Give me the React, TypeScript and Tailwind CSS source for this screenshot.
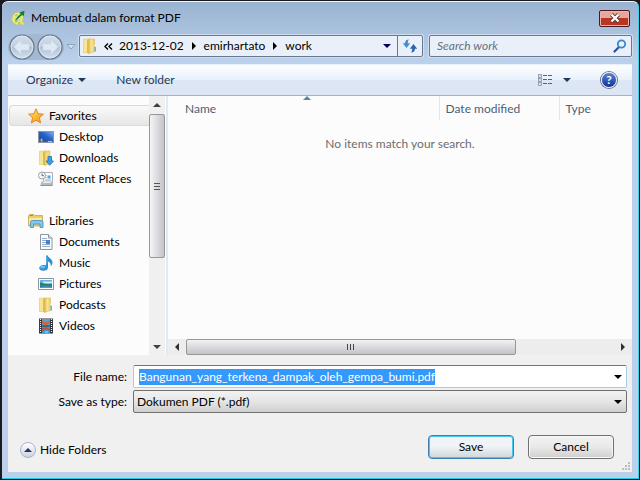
import React, { useEffect, useRef } from "react";

type IconProps = { className?: string };

function AppLogo() {
  return (
    <svg width="16" height="16" viewBox="0 0 16 16" aria-hidden="true">
      <ellipse cx="6.500" cy="8.500" rx="4" ry="4.700" fill="#cbdcae" stroke="#e9ee5c" strokeWidth="2.600" transform="rotate(15 6.500 8.500)" />
      <path d="M8 11l4.500 3" stroke="#e3e85a" strokeWidth="2.400" />
      <path d="M4.500 12.500l2-2M4.500 5.500l1.500-1M7 13.300l2-.8" stroke="#96a83e" />
      <path d="M4 11.500C4.800 8.500 6.800 6 9.800 4L8.500 2.500 13.500.8 12.800 6 11.300 5C9 6.500 6.500 9 4 11.500z" fill="#1c7a2c" />
    </svg>
  );
}

function FolderIcon({ className }: IconProps) {
  return (
    <svg className={className} width="16" height="16" viewBox="0 0 16 16" aria-hidden="true">
      <defs>
        <linearGradient id="leaf" x1="0" y1="0" x2="1" y2="0">
          <stop offset="0" stopColor="#e2bf55" />
          <stop offset=".5" stopColor="#f8e396" />
          <stop offset="1" stopColor="#ecca66" />
        </linearGradient>
      </defs>
      <path d="M1.500 1.200H8v13.300H1.500z" fill="#f7e495" stroke="#e2c66c" strokeWidth=".6" />
      <path d="M6.500 1H12.500v12.500l-6 2z" fill="url(#leaf)" stroke="#dcba55" strokeWidth=".6" />
      <path d="M5 1.800l2.200-.6v14.300L5 14.800z" fill="#dfba4e" />
      <path d="M12.500 8.500H14v5h-1.500z" fill="#5fb4ea" />
      <path d="M12.500 6.500h1.300v2h-1.300z" fill="#fff" />
    </svg>
  );
}

function StarIcon() {
  return (
    <svg width="16" height="16" viewBox="0 0 16 16" aria-hidden="true">
      <defs>
        <linearGradient id="star" x1="0" y1="0" x2="1" y2="1">
          <stop offset="0" stopColor="#ffe98a" />
          <stop offset=".5" stopColor="#fdbd35" />
          <stop offset="1" stopColor="#f58a1a" />
        </linearGradient>
      </defs>
      <path d="M8 .8l2.100 4.900 5.300.5-4 3.500 1.200 5.200L8 12.200 3.400 14.900l1.200-5.200-4-3.500 5.300-.5z" fill="url(#star)" stroke="#dd7f22" strokeWidth=".9" strokeLinejoin="round" />
    </svg>
  );
}

function DesktopIcon() {
  return (
    <svg width="16" height="16" viewBox="0 0 16 16" aria-hidden="true">
      <defs>
        <linearGradient id="desk" x1="0" y1="1" x2="1" y2="0">
          <stop offset="0" stopColor="#1743a5" />
          <stop offset=".55" stopColor="#2560c8" />
          <stop offset="1" stopColor="#86b4ea" />
        </linearGradient>
      </defs>
      <rect x=".5" y="2.500" width="15" height="11" fill="url(#desk)" stroke="#8a97aa" />
      <path d="M1 12h14v1H1z" fill="#4b5d78" />
      <path d="M1.500 10h1.500v1.500H1.500z" fill="#e2653a" />
      <path d="M3 9.500h1.500v1.500H3z" fill="#79c04a" />
      <path d="M3 11h1.500v1.500H3z" fill="#f4c431" />
      <path d="M10 12h4v1h-4z" fill="#b4c4d4" />
    </svg>
  );
}

function DownloadsIcon() {
  return (
    <svg width="16" height="16" viewBox="0 0 16 16" aria-hidden="true">
      <path d="M1.500 1.200H8v13.300H1.500z" fill="#f7e495" stroke="#e2c66c" strokeWidth=".6" />
      <path d="M6.500 1H12v12.500l-5.500 2z" fill="#f3d778" stroke="#dcba55" strokeWidth=".6" />
      <path d="M5 1.800l2.200-.6v14.300L5 14.800z" fill="#dfba4e" />
      <path d="M10 6.500h3.500V11h2L11.700 15.300 8 11h2z" fill="#3ba0ea" stroke="#1d6fb8" strokeWidth=".8" />
    </svg>
  );
}

function RecentIcon() {
  return (
    <svg width="16" height="16" viewBox="0 0 16 16" aria-hidden="true">
      <path d="M5.500 1.500h9v10h-9z" fill="#fafbfc" stroke="#a9b0b7" />
      <path d="M9.500 4.500h3v3h-3z" fill="#55a6e2" />
      <path d="M7 4.500h1.500M7 6.500h1.500M7 9h6" stroke="#86aed0" />
      <path d="M3.500 10.500h11.500v4.500H2z" fill="#b6babe" />
      <path d="M5 11.500h8" stroke="#eceef0" />
      <path d="M3 14.500h11" stroke="#8d9297" />
      <circle cx="4" cy="4.500" r="3.500" fill="#f6f8f9" stroke="#9ca3a9" />
      <path d="M4 2.500v2.200h2" stroke="#586470" fill="none" strokeWidth=".9" />
    </svg>
  );
}

function LibrariesIcon() {
  return (
    <svg width="16" height="16" viewBox="0 0 16 16" aria-hidden="true">
      <path d="M.5 3L1.500 1.500h4.500l1 1h7.500V13H.5z" fill="#eccd68" stroke="#c9a547" strokeWidth=".8" />
      <path d="M1 5h13v6H1z" fill="#faeaa4" />
      <path d="M2 2h3v1H2z" fill="#68a64e" />
      <path d="M2.500 14.500V9.300Q2.500 7.500 4.500 7.500h8.500q2 0 2 1.800v5.200h-3V11H5.500v3.500z" fill="#80c9ea" stroke="#4596c5" strokeWidth=".9" />
    </svg>
  );
}

function DocumentIcon() {
  return (
    <svg width="16" height="16" viewBox="0 0 16 16" aria-hidden="true">
      <path d="M2.500.5H10.500L14 4v11.500H2.500z" fill="#fbfcfd" stroke="#8f969e" />
      <path d="M10.500.5V4H14" fill="#dde3e9" stroke="#8f969e" />
      <path d="M4 4.500h5M4 6.500h4M4 8.500h4M4 10.500h8M4 12.500h8" stroke="#9db0c9" />
      <path d="M8 6h4v4H8z" fill="#3f86d2" />
    </svg>
  );
}

function MusicIcon() {
  return (
    <svg width="16" height="16" viewBox="0 0 16 16" aria-hidden="true">
      <path d="M8 .5h1.800c.4 2.500 4.700 3.300 4.700 7.200 0 1.500-.9 2.800-1.900 3.600.6-2.600-.4-4.100-2.600-4.900v6.100c0 2-2 3.300-4.700 3.300-2.500 0-4.100-1-4.100-2.700 0-1.900 2-3.200 4.500-3.200.9 0 1.700.1 2.300.4z" fill="#2a8fd6" />
      <ellipse cx="4.800" cy="12.100" rx="2.600" ry="1.300" fill="#6fc0f2" />
      <path d="M8.800 1.500v7" stroke="#82c6ef" strokeWidth=".8" />
    </svg>
  );
}

function PicturesIcon() {
  return (
    <svg width="16" height="16" viewBox="0 0 16 16" aria-hidden="true">
      <path d="M.5 2.500h15v11H.5z" fill="#fff" stroke="#8c949c" />
      <path d="M2 4h12v3H2z" fill="#5fb4e6" />
      <path d="M5 5.500h9V8H5z" fill="#cfeaf6" />
      <path d="M2 6.500c3 .5 5 1.500 12 1V9.500H2z" fill="#2f7f68" />
      <path d="M2 9h12v3H2z" fill="#2b7eae" />
      <path d="M2 11.500c4-1.500 8-1.500 12 0v.5H2z" fill="#4fa6a0" />
    </svg>
  );
}

function VideosIcon() {
  return (
    <svg width="16" height="16" viewBox="0 0 16 16" aria-hidden="true">
      <path d="M1 .5h14v15H1z" fill="#2f3338" />
      <path d="M4 1h8v6.500H4z" fill="#4ba6dc" />
      <path d="M4 8.500h8V15H4z" fill="#3d9bd8" />
      <path d="M4 2l3.500 2.500L12 2.500v2.500L9 7H5.500L4 5z" fill="#d0663c" />
      <path d="M4 10.500l4-1.500 4 2v2L8.500 11.500 4 13z" fill="#b8563a" />
      <path d="M7 13h3v2H7z" fill="#68bdee" />
      <path d="M2.500 1v14M13.500 1v14" stroke="#eef2f4" strokeWidth="1.200" strokeDasharray="1 1" />
    </svg>
  );
}

function Triangle({ dir, className }: { dir: "up" | "down" | "left" | "right"; className?: string }) {
  const points = {
    up: "0,6 4,2 8,6",
    down: "0,2 8,2 4,6",
    left: "6,0 2,4 6,8",
    right: "2,0 6,4 2,8",
  }[dir];
  return (
    <svg className={className} width="8" height="8" viewBox="0 0 8 8" aria-hidden="true">
      <polygon points={points} fill="currentColor" />
    </svg>
  );
}

function RoundArrow({ flip }: { flip?: boolean }) {
  return (
    <svg width="26" height="26" viewBox="0 0 26 26" aria-hidden="true" className={flip ? "-scale-x-100" : ""}>
      <defs>
        <linearGradient id="orb" x1="0" y1="0" x2="0" y2="1">
          <stop offset="0" stopColor="#d3deea" />
          <stop offset=".48" stopColor="#c0cfe0" />
          <stop offset=".52" stopColor="#afc1d5" />
          <stop offset="1" stopColor="#d6e3f1" />
        </linearGradient>
      </defs>
      <circle cx="13" cy="13" r="12" fill="url(#orb)" stroke="#66758a" strokeWidth="1.200" />
      <circle cx="13" cy="13" r="10.800" fill="none" stroke="#e2ebf5" strokeWidth=".8" />
      <path d="M5 13L12 6v4h8v6h-8v4z" fill="#dfe9f3" stroke="#d0dce9" strokeWidth=".6" strokeLinejoin="round" />
    </svg>
  );
}

function SearchIcon() {
  return (
    <svg width="14" height="14" viewBox="0 0 14 14" aria-hidden="true">
      <path d="M1.500 12.500L6 8" stroke="#2b4f9c" strokeWidth="2.200" strokeLinecap="round" />
      <circle cx="8.500" cy="5" r="3.700" fill="#e9f4fc" stroke="#3b86cf" strokeWidth="1.800" />
    </svg>
  );
}

function RefreshIcon() {
  return (
    <svg width="16" height="14" viewBox="0 0 16 14" aria-hidden="true">
      <path d="M7 .5C4.300.5 3 2 3 4.300H.8L4.500 9 8.200 4.300H5.800C5.800 2.800 6 1.500 7 .5z" fill="#3f8fd2" />
      <path d="M9 13.500c2.700 0 4-1.500 4-3.800h2.200L11.500 5 7.800 9.700h2.400c0 1.500-.2 2.800-1.200 3.800z" fill="#2c64b0" />
    </svg>
  );
}

function ViewIcon() {
  return (
    <svg width="16" height="14" viewBox="0 0 16 14" aria-hidden="true">
      {[1, 5, 9].map((y, i) => (
        <g key={y}>
          <rect x="1.500" y={y + 0.5} width="3" height="3" fill="#fff" stroke="#8292a8" strokeWidth=".8" />
          <rect x="2.500" y={y + 1.5} width="1" height="1" fill={i === 1 ? "#d03a2c" : "#4d76ac"} />
          <path d={`M6 ${y + 1.5}h4M11 ${y + 1.5}h4`} stroke="#52637d" />
        </g>
      ))}
    </svg>
  );
}

function HelpIcon() {
  return (
    <span className="flex size-4 items-center justify-center rounded-full border border-[#dfe6f2] bg-linear-to-b from-[#5a83d6] to-[#14309a] text-xs font-bold text-white ring-1 ring-[#6c7484]">
      ?
    </span>
  );
}

type Item = { label: string; icon: React.ReactNode };

const favorites: Item[] = [
  { label: "Desktop", icon: <DesktopIcon /> },
  { label: "Downloads", icon: <DownloadsIcon /> },
  { label: "Recent Places", icon: <RecentIcon /> },
];

const libraries: Item[] = [
  { label: "Documents", icon: <DocumentIcon /> },
  { label: "Music", icon: <MusicIcon /> },
  { label: "Pictures", icon: <PicturesIcon /> },
  { label: "Podcasts", icon: <FolderIcon /> },
  { label: "Videos", icon: <VideosIcon /> },
];

function TreeGroup({ label, icon, items, selected }: Item & { items: Item[]; selected?: boolean }) {
  return (
    <li>
      <button
        type="button"
        className={
          selected
            ? "flex h-[21px] w-full items-center gap-[5px] rounded-l-sm border border-r-0 border-[#dadada] bg-linear-to-b from-[#fafafa] to-[#e6e6e6] pl-[18px]"
            : "flex h-[21px] w-full items-center gap-[5px] border border-r-0 border-transparent pl-[18px]"
        }
      >
        {icon}
        {label}
      </button>
      <ul>
        {items.map((item) => (
          <li key={item.label}>
            <button type="button" className="flex h-[21px] w-full items-center gap-[5px] pl-[29px]">
              {item.icon}
              {item.label}
            </button>
          </li>
        ))}
      </ul>
    </li>
  );
}

function VerticalScrollbar() {
  return (
    <div className="flex w-4 flex-col items-center bg-[#f0f0f0] text-[#404040]">
      <button type="button" aria-label="Scroll up" className="flex h-[18px] w-full items-center justify-center">
        <Triangle dir="up" />
      </button>
      <div className="w-full flex-1">
        <div className="flex h-[64%] w-full flex-col items-center justify-center gap-0.5 rounded-xs border border-[#979797] bg-linear-to-r from-[#f5f5f5] via-[#dcdce0] to-[#c4c4c9]">
          <span className="h-px w-1.5 bg-[#555]" />
          <span className="h-px w-1.5 bg-[#555]" />
          <span className="h-px w-1.5 bg-[#555]" />
        </div>
      </div>
      <button type="button" aria-label="Scroll down" className="flex h-4 w-full items-center justify-center">
        <Triangle dir="down" />
      </button>
    </div>
  );
}

function HorizontalScrollbar() {
  return (
    <div className="flex h-4 items-center bg-[#ededed] text-[#303030]">
      <button type="button" aria-label="Scroll left" className="flex h-full w-[18px] items-center justify-center">
        <Triangle dir="left" />
      </button>
      <div className="h-full flex-1">
        <div className="flex h-full w-[77%] items-center justify-center gap-0.5 rounded-xs border border-[#979797] bg-linear-to-b from-[#f3f3f3] via-[#dadade] to-[#c3c3c8]">
          <span className="h-1.5 w-px bg-[#444]" />
          <span className="h-1.5 w-px bg-[#444]" />
          <span className="h-1.5 w-px bg-[#444]" />
        </div>
      </div>
      <button type="button" aria-label="Scroll right" className="flex h-full w-[18px] items-center justify-center">
        <Triangle dir="right" />
      </button>
    </div>
  );
}

export default function App() {
  const fileName = useRef<HTMLInputElement>(null);
  useEffect(() => {
    fileName.current?.focus();
    fileName.current?.select();
  }, []);

  return (
    <div className="flex min-h-screen flex-col bg-[#1a1a1f] p-px pl-0.5 font-['Lato','Open_Sans',sans-serif] text-xs text-black">
      <div className="flex flex-1 flex-col rounded-t-md border-t border-r border-b border-t-[#eef5fc] border-r-[#3fd0ea] border-b-[#1fc8e4] bg-[#bbd1eb] bg-linear-to-b from-[#9ab3d1] to-[#bbd1eb] to-[60px] px-1.5 pb-1.5">
        <header className="flex h-8 items-center gap-1 pr-0.5 pl-[3px]">
          <AppLogo />
          <h1 className="flex-1">Membuat dalam format PDF</h1>
          <button
            type="button"
            aria-label="Close"
            className="flex h-[17px] w-[31px] items-center justify-center rounded-xs border border-[#4d1a22] bg-linear-to-b from-[#e6a79c] from-45% to-[#b93622] to-50% inset-ring inset-ring-[#e9b5ac]"
          >
            <svg width="12" height="10" viewBox="0 0 12 10" aria-hidden="true">
              <path d="M2.500 1.500l7 7M9.500 1.500l-7 7" stroke="#5b2f35" strokeWidth="4" />
              <path d="M2.500 1.500l7 7M9.500 1.500l-7 7" stroke="#fff" strokeWidth="2.400" />
            </svg>
          </button>
        </header>

        <div className="flex h-[30px] items-start gap-0.5">
          <div className="flex h-[26px] items-center">
            <div className="flex items-center gap-0.5 rounded-full bg-[#a3b8d1] px-px">
              <button type="button" aria-label="Back"><RoundArrow /></button>
              <button type="button" aria-label="Forward"><RoundArrow flip /></button>
            </div>
            <button type="button" aria-label="Recent pages" className="ml-0.5">
              <svg width="10" height="8" viewBox="0 0 10 8" aria-hidden="true">
                <path d="M1 1.500h8L5 6z" fill="#d3e0ef" stroke="#8fa4bf" />
              </svg>
            </button>
          </div>
          <nav aria-label="Address" className="mt-px ml-px flex h-[22px] flex-1 rounded-xs border border-[#67788f] bg-[#e9f0f9] ring-1 ring-[#cfdeef]">
            <div className="flex flex-1 items-center gap-1.5 pl-0.5">
              <FolderIcon />
              <button type="button" aria-label="Earlier folders">
                <svg width="9" height="7" viewBox="0 0 9 7" aria-hidden="true">
                  <path d="M4 .5l-3 3 3 3M8 .5l-3 3 3 3" fill="none" stroke="#000" strokeWidth="1.400" />
                </svg>
              </button>
              <button type="button">2013-12-02</button>
              <Triangle dir="right" />
              <button type="button">emirhartato</button>
              <Triangle dir="right" />
              <button type="button">work</button>
            </div>
            <button type="button" aria-label="Previous locations" className="flex w-5 items-center justify-center text-[#00005a]">
              <Triangle dir="down" />
            </button>
            <button type="button" aria-label="Refresh" className="flex w-[25px] items-center justify-center border-l border-[#67788f]">
              <RefreshIcon />
            </button>
          </nav>
          <label className="mt-px ml-1 flex h-[22px] w-[203px] items-center rounded-xs border border-[#67788f] bg-[#e9f0f9] px-1 ring-1 ring-[#cfdeef]">
            <input
              type="text"
              aria-label="Search work"
              placeholder="Search work"
              className="min-w-0 flex-1 bg-transparent pl-[3px] italic outline-none placeholder:text-[#6d7075]"
            />
            <SearchIcon />
          </label>
        </div>

        <main className="flex flex-1 flex-col">
          <div className="flex h-8 items-center border-t border-b border-t-[#e9f2fb] border-b-[#a0b4cf] bg-linear-to-b from-[#fafdff] from-10% via-[#e7f0fa] via-50% to-[#dce6f4] to-52% pr-[15px] pl-[18px] text-[#1e395b]">
            <button type="button" className="flex items-center gap-[5px]">
              Organize
              <Triangle dir="down" />
            </button>
            <button type="button" className="ml-[30px]">New folder</button>
            <div className="flex flex-1 items-center justify-end">
              <button type="button" aria-label="Change view"><ViewIcon /></button>
              <button type="button" aria-label="View options" className="ml-2.5"><Triangle dir="down" /></button>
              <button type="button" aria-label="Help" className="ml-[30px]"><HelpIcon /></button>
            </div>
          </div>

          <div className="flex flex-1 bg-[#fcfcfc]">
            <aside className="flex w-[157px]">
              <ul className="flex flex-1 flex-col gap-[21px] pt-[9px] pl-px">
                <TreeGroup label="Favorites" icon={<StarIcon />} items={favorites} selected />
                <TreeGroup label="Libraries" icon={<LibrariesIcon />} items={libraries} />
              </ul>
              <VerticalScrollbar />
            </aside>
            <section className="ml-px flex flex-1 flex-col border-l-2 border-[#dfeaf7]">
              <table className="w-full table-fixed text-left text-[#4c607a]">
                <thead>
                  <tr className="h-6">
                    <th scope="col" className="relative border-r border-[#e2e8f0] pt-0.5 pl-[17px] font-normal">
                      Name
                      <Triangle dir="up" className="absolute top-0 left-1/2 -mt-0.5 text-[#4f87a8]" />
                    </th>
                    <th scope="col" className="w-[120px] border-r border-[#e2e8f0] pt-0.5 pl-1.5 font-normal">Date modified</th>
                    <th scope="col" className="w-[73px] pt-0.5 pl-1.5 font-normal">Type</th>
                  </tr>
                </thead>
              </table>
              <p className="flex-1 pt-4 text-center text-[#6d6d6d]">No items match your search.</p>
              <HorizontalScrollbar />
            </section>
          </div>

          <form className="flex flex-col bg-[#f0f0f0] pt-2.5" onSubmit={(e) => e.preventDefault()}>
            <div className="grid grid-cols-[119px_1fr] items-center gap-x-1.5 gap-y-0.5 pr-[5px]">
              <label htmlFor="file-name" className="text-right">File name:</label>
              <div className="flex h-[23px] items-center rounded-xs border border-[#a9cbe6] border-t-[#4a7fb0] bg-white pr-1 pl-[5px]">
                <input
                  id="file-name"
                  ref={fileName}
                  type="text"
                  defaultValue="Bangunan_yang_terkena_dampak_oleh_gempa_bumi.pdf"
                  className="min-w-0 flex-1 outline-none selection:bg-[#3399ff] selection:text-white"
                />
                <button type="button" aria-label="Earlier file names"><Triangle dir="down" /></button>
              </div>
              <label htmlFor="file-type" className="text-right">Save as type:</label>
              <div className="relative">
                <select
                  id="file-type"
                  className="block h-[23px] w-full appearance-none rounded-xs border border-[#707070] bg-linear-to-b from-[#f2f2f2] via-[#e6e6e6] via-50% to-[#cfcfcf] pl-[3px]"
                >
                  <option>Dokumen PDF (*.pdf)</option>
                </select>
                <Triangle dir="down" className="pointer-events-none absolute top-2 right-[5px]" />
              </div>
            </div>
            <div className="mt-[22px] flex h-6 items-center pr-[18px] pl-3">
              <button type="button" className="mt-1.5 flex items-center gap-1">
                <span className="flex size-4 items-center justify-center rounded-full border border-[#a9b3d2] bg-linear-to-b from-white to-[#cdd3dc] text-[#26326b]">
                  <Triangle dir="up" />
                </span>
                Hide Folders
              </button>
              <div className="ml-auto flex gap-3.5">
                <button
                  type="submit"
                  className="h-6 w-[86px] rounded-sm border border-[#3c7fb1] bg-linear-to-b from-[#f0f4f6] from-45% to-[#d0d6da] inset-ring inset-ring-[#48c8ee]"
                >
                  Save
                </button>
                <button
                  type="button"
                  className="h-6 w-[86px] rounded-sm border border-[#707070] bg-linear-to-b from-[#f2f2f2] via-[#e9e9e9] via-50% to-[#cfcfcf] inset-ring inset-ring-[#f8f8f8]"
                >
                  Cancel
                </button>
              </div>
            </div>
            <div className="flex h-[13px] items-end justify-end p-0.5">
              <svg width="8" height="8" viewBox="0 0 8 8" aria-hidden="true">
                <path d="M6 0h2v2H6zM3 3h2v2H3zM6 3h2v2H6zM0 6h2v2H0zM3 6h2v2H3zM6 6h2v2H6z" fill="#bdbdbd" />
              </svg>
            </div>
          </form>
        </main>
      </div>
    </div>
  );
}
